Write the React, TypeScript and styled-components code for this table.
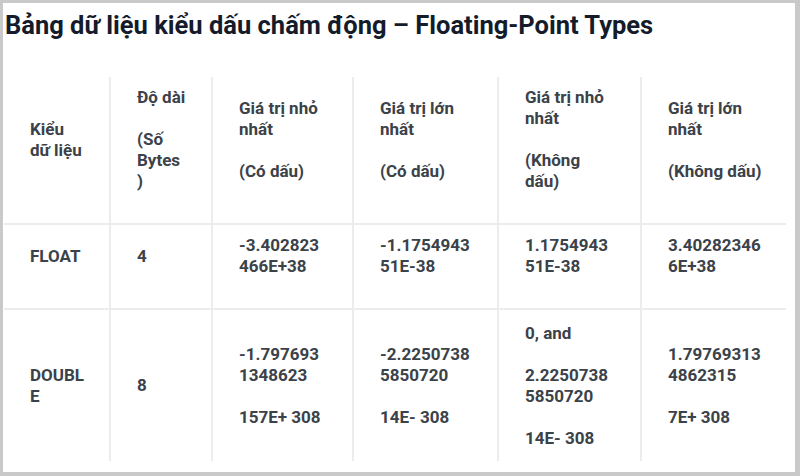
import React from 'react';
import styled, { createGlobalStyle } from 'styled-components';

const GlobalStyle = createGlobalStyle`
  html, body {
    margin: 0;
    padding: 0;
    background: #c9c9c9;
  }
`;

const Frame = styled.div`
  width: 800px;
  height: 476px;
  box-sizing: border-box;
  padding: 3px 5px 4px 3px;
`;

const Panel = styled.div`
  height: 100%;
  background: #ffffff;
  padding: 0 0 0 1px;
  box-sizing: border-box;
  font-family: Roboto, "Noto Sans", Arial, sans-serif;
`;

const Title = styled.h1`
  margin: 0;
  padding: 6px 0 0 1px;
  height: 74px;
  box-sizing: border-box;
  font-size: 25.5px;
  line-height: 32px;
  font-weight: 700;
  color: #141b2b;
`;

const Table = styled.table`
  width: 782px;
  table-layout: fixed;
  border-collapse: collapse;
`;

const Row = styled.tr<{ $h: number; $last?: boolean }>`
  height: ${(p) => p.$h}px;
  border-bottom: ${(p) => (p.$last ? 'none' : '2px solid #ececec')};
`;

const Cell = styled.td<{ $trail?: boolean }>`
  padding: 10px 6px ${(p) => (p.$trail ? 31 : 10)}px 26px;
  vertical-align: middle;
  border-right: 2px solid #ececec;
  font-size: 17px;
  line-height: 21px;
  font-weight: 700;
  color: #3b4249;
  white-space: nowrap;

  &:last-child {
    border-right: none;
  }
`;

const Line = styled.div`
  min-height: 21px;
`;

const widths = [106, 102, 141, 145, 143, 145];

type RowData = { h: number; trail: boolean; cells: string[][] };

const rows: RowData[] = [
  {
    h: 146,
    trail: true,
    cells: [
      ['Kiểu', 'dữ liệu'],
      ['Độ dài', '', '(Số', 'Bytes', ')'],
      ['Giá trị nhỏ', 'nhất', '', '(Có dấu)'],
      ['Giá trị lớn', 'nhất', '', '(Có dấu)'],
      ['Giá trị nhỏ', 'nhất', '', '(Không', 'dấu)'],
      ['Giá trị lớn', 'nhất', '', '(Không dấu)'],
    ],
  },
  {
    h: 85,
    trail: true,
    cells: [
      ['FLOAT'],
      ['4'],
      ['-3.402823', '466E+38'],
      ['-1.1754943', '51E-38'],
      ['1.1754943', '51E-38'],
      ['3.40282346', '6E+38'],
    ],
  },
  {
    h: 152,
    trail: false,
    cells: [
      ['DOUBL', 'E'],
      ['8'],
      ['-1.797693', '1348623', '', '157E+ 308'],
      ['-2.2250738', '5850720', '', '14E- 308'],
      ['0, and', '', '2.2250738', '5850720', '', '14E- 308'],
      ['1.79769313', '4862315', '', '7E+ 308'],
    ],
  },
];

export default function App() {
  return (
    <>
      <GlobalStyle />
      <Frame>
        <Panel>
          <Title>Bảng dữ liệu kiểu dấu chấm động – Floating-Point Types</Title>
          <Table>
            <colgroup>
              {widths.map((w, i) => (
                <col key={i} style={{ width: w }} />
              ))}
            </colgroup>
            <tbody>
              {rows.map((r, ri) => (
                <Row key={ri} $h={r.h} $last={ri === rows.length - 1}>
                  {r.cells.map((lines, ci) => (
                    <Cell key={ci} $trail={r.trail}>
                      {lines.map((t, li) => (
                        <Line key={li}>{t || '\u00a0'}</Line>
                      ))}
                    </Cell>
                  ))}
                </Row>
              ))}
            </tbody>
          </Table>
        </Panel>
      </Frame>
    </>
  );
}
